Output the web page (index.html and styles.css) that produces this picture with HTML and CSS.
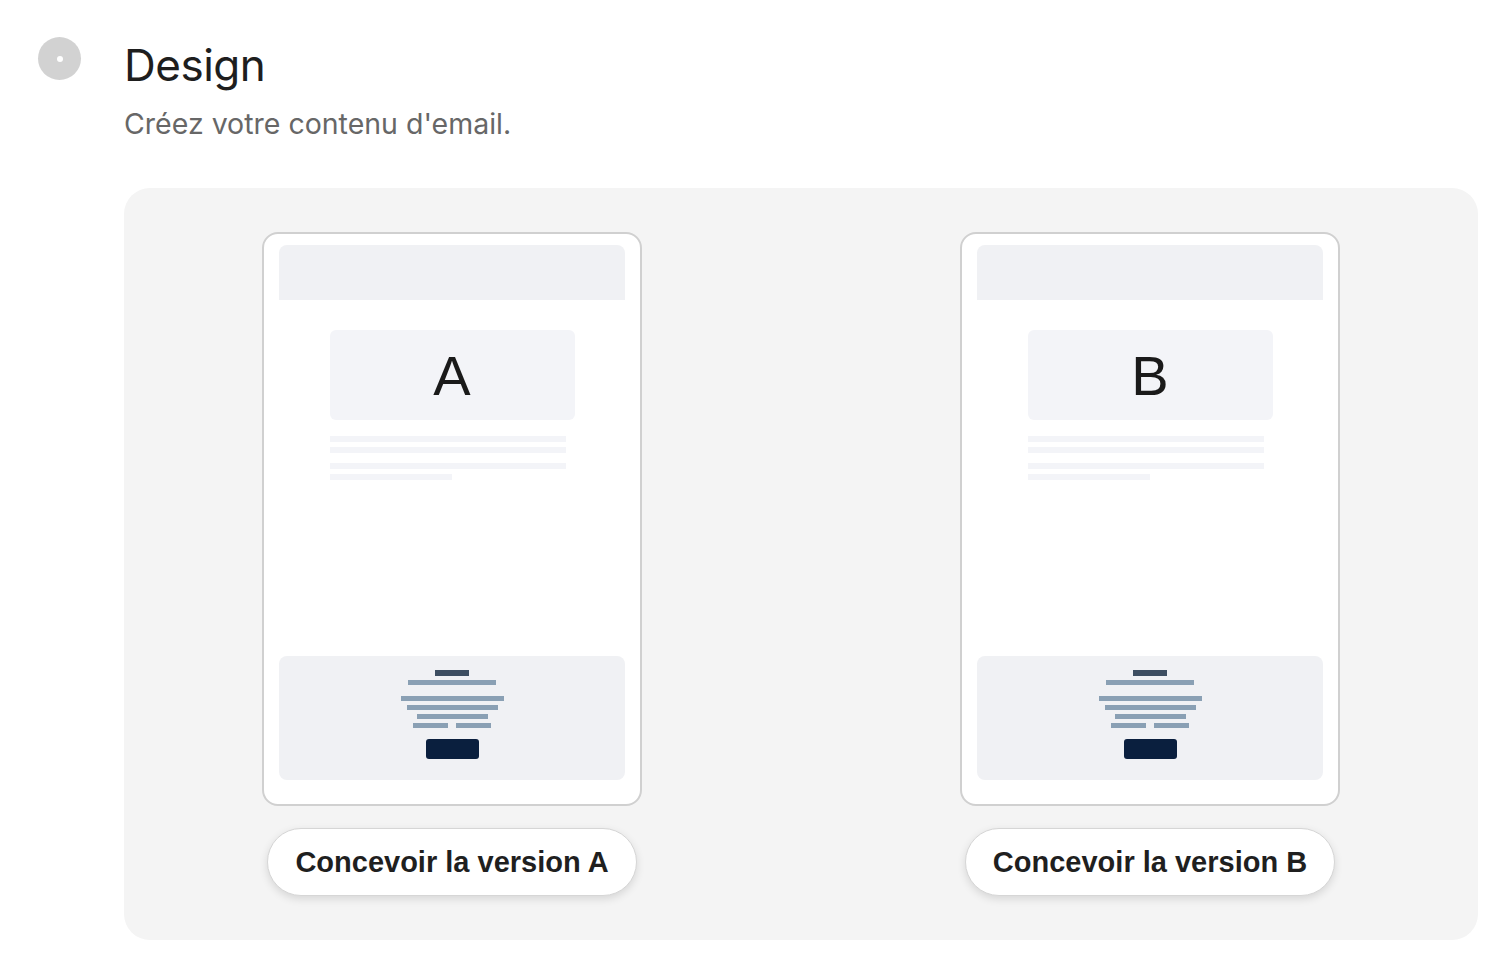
FILE: index.html
```html
<!DOCTYPE html>
<html lang="fr">
<head>
  <meta charset="UTF-8">
  <meta name="viewport" content="width=device-width, initial-scale=1.0">
  <title>Design</title>
  <link rel="stylesheet" href="styles.css">
</head>
<body>
  <section class="step">
    <div class="step-icon"><span class="step-dot"></span></div>

    <div class="step-body">
      <h1 class="step-title">Design</h1>
      <p class="step-desc">Créez votre contenu d'email.</p>

      <div class="variants">
        <div class="variant">
          <div class="preview">
            <div class="preview-header"></div>
            <div class="preview-copy">
              <div class="preview-hero">A</div>
              <div class="line"></div>
              <div class="line"></div>
              <div class="line gap"></div>
              <div class="line short"></div>
            </div>
            <div class="preview-footer">
              <div class="f-bar dark"></div>
              <div class="f-bar w88"></div>
              <div class="f-bar w103 sep"></div>
              <div class="f-bar w91"></div>
              <div class="f-bar w71"></div>
              <div class="f-pair"><div class="f-bar w35"></div><div class="f-bar w35"></div></div>
              <div class="f-button"></div>
            </div>
          </div>
          <button class="design-btn">Concevoir la version A</button>
        </div>

        <div class="variant">
          <div class="preview">
            <div class="preview-header"></div>
            <div class="preview-copy">
              <div class="preview-hero">B</div>
              <div class="line"></div>
              <div class="line"></div>
              <div class="line gap"></div>
              <div class="line short"></div>
            </div>
            <div class="preview-footer">
              <div class="f-bar dark"></div>
              <div class="f-bar w88"></div>
              <div class="f-bar w103 sep"></div>
              <div class="f-bar w91"></div>
              <div class="f-bar w71"></div>
              <div class="f-pair"><div class="f-bar w35"></div><div class="f-bar w35"></div></div>
              <div class="f-button"></div>
            </div>
          </div>
          <button class="design-btn">Concevoir la version B</button>
        </div>
      </div>
    </div>
  </section>
</body>
</html>
```

FILE: styles.css
```css
body {
  margin: 0;
  background: #fff;
  font-family: "Liberation Sans", Arial, sans-serif;
  color: #1f1f1f;
}

.step {
  display: flex;
  padding: 37px 32px 40px 38px;
}

.step-icon {
  width: 43px;
  height: 43px;
  flex-shrink: 0;
  border-radius: 50%;
  background: #d2d2d2;
  display: flex;
  align-items: center;
  justify-content: center;
}

.step-dot {
  width: 6px;
  height: 6px;
  border-radius: 50%;
  background: #fff;
}

.step-body {
  flex: 1;
  margin-left: 43px;
}

.step-title {
  margin: 0;
  font-family: Inter, sans-serif;
  font-size: 44px;
  font-weight: 400;
  line-height: 56px;
  letter-spacing: -0.5px;
  color: #1e1e1e;
}

.step-desc {
  margin: 15px 0 0;
  font-family: Inter, sans-serif;
  font-size: 28.5px;
  line-height: 32px;
  color: #676767;
}

.variants {
  margin-top: 48px;
  background: #f4f4f4;
  border-radius: 26px;
  padding: 44px 138px;
  display: flex;
  justify-content: space-between;
}

.variant {
  display: flex;
  flex-direction: column;
  align-items: center;
}

/* email thumbnail */
.preview {
  width: 380px;
  height: 574px;
  box-sizing: border-box;
  background: #fff;
  border: 2px solid #d0d0d0;
  border-radius: 16px;
  padding: 11px 15px 24px;
  display: flex;
  flex-direction: column;
  align-items: center;
}

.preview-header {
  align-self: stretch;
  height: 55px;
  background: #f0f1f4;
  border-radius: 8px 8px 0 0;
}

.preview-copy {
  width: 245px;
  margin-top: 30px;
}

.preview-hero {
  height: 90px;
  background: #f3f4f8;
  border-radius: 6px;
  display: flex;
  align-items: center;
  justify-content: center;
  font-size: 56px;
  color: #1a1a1a;
  margin-bottom: 16px;
}

.line {
  width: 236px;
  height: 6px;
  background: #f3f4f8;
  margin-bottom: 5px;
}

.line.gap {
  margin-top: 10px;
}

.line.short {
  width: 122px;
}

.preview-footer {
  align-self: stretch;
  margin-top: auto;
  height: 124px;
  box-sizing: border-box;
  background: #f0f1f4;
  border-radius: 8px;
  padding-top: 14px;
  display: flex;
  flex-direction: column;
  align-items: center;
}

.f-bar {
  height: 5px;
  background: #8aa0b4;
  margin-bottom: 4px;
}

.f-bar.dark {
  width: 34px;
  height: 6px;
  background: #3d4e61;
}

.f-bar.w88 { width: 88px; }
.f-bar.w103 { width: 103px; }
.f-bar.w91 { width: 91px; }
.f-bar.w71 { width: 71px; }
.f-bar.w35 { width: 35px; }

.f-bar.sep {
  margin-top: 7px;
}

.f-pair {
  display: flex;
  gap: 8px;
}

.f-button {
  margin-top: 7px;
  width: 53px;
  height: 20px;
  border-radius: 3px;
  background: #0a1f3e;
}

.design-btn {
  margin-top: 22px;
  width: 370px;
  height: 68px;
  border: 1px solid #d6d6d6;
  border-radius: 34px;
  background: #fff;
  box-shadow: 0 3px 8px rgba(0, 0, 0, 0.12);
  font-family: "Liberation Sans", Arial, sans-serif;
  font-size: 29px;
  font-weight: 700;
  color: #1f1f1f;
  cursor: pointer;
}
```
